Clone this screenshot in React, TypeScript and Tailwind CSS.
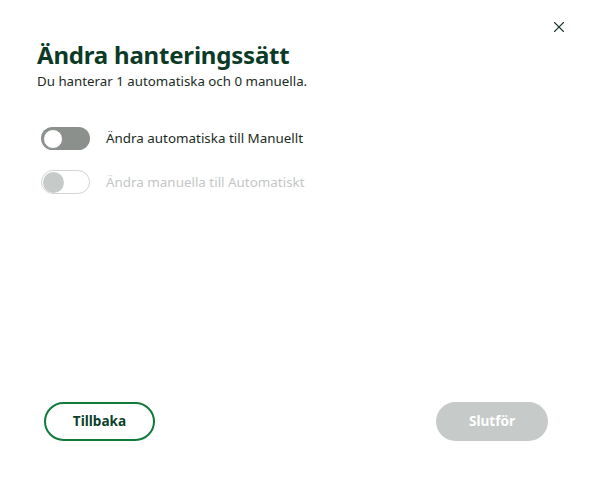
import { X } from "lucide-react"

function Toggle({ disabled }: { disabled?: boolean }) {
  if (disabled) {
    return (
      <div className="flex h-[24px] w-[49px] shrink-0 items-center rounded-full border border-[#d3d6d4] bg-white px-[1px]">
        <div className="h-[21px] w-[21px] rounded-full bg-[#c6cac8]" />
      </div>
    )
  }
  return (
    <div className="flex h-[23px] w-[49px] shrink-0 items-center rounded-full bg-[#8b908d] px-[2px]">
      <div className="h-[20px] w-[20px] rounded-full border border-[#8b908d] bg-white" />
    </div>
  )
}

export default function App() {
  return (
    <div
      className="relative flex h-[483px] w-[593px] flex-col bg-white text-[#0c3524]"
      style={{ fontFamily: '"Noto Sans", sans-serif' }}
    >
      <button className="absolute right-[25px] top-[18px] text-[#1d3b2c]">
        <X className="h-[18px] w-[18px]" strokeWidth={1.5} />
      </button>

      <div className="px-[37px] pt-[39px]">
        <h1 className="text-[24px] font-bold leading-[31px] tracking-[-0.2px] text-[#0b3a26]">Ändra hanteringssätt</h1>
        <p className="mt-[2px] text-[13.3px] leading-[18px] text-[#1b2b24]">
          Du hanterar 1 automatiska och 0 manuella.
        </p>
      </div>

      <div className="mt-[37px] flex flex-col gap-[20px] px-[41px]">
        <div className="flex items-center gap-[16px]">
          <Toggle />
          <span className="text-[13.4px] text-[#1b2b24]">Ändra automatiska till Manuellt</span>
        </div>
        <div className="flex items-center gap-[16px]">
          <Toggle disabled />
          <span className="text-[13.4px] text-[#c3c7c5]">Ändra manuella till Automatiskt</span>
        </div>
      </div>

      <div className="mt-auto flex items-center justify-between px-[44px] pb-[42px] pr-[45px]">
        <button className="h-[39px] w-[111px] rounded-full border-2 border-[#0f7a3a] text-[13.6px] font-bold text-[#0c3f2a]">
          Tillbaka
        </button>
        <button className="h-[39px] w-[112px] rounded-full bg-[#c6cac8] text-[13.6px] font-bold text-white">
          Slutför
        </button>
      </div>
    </div>
  )
}
